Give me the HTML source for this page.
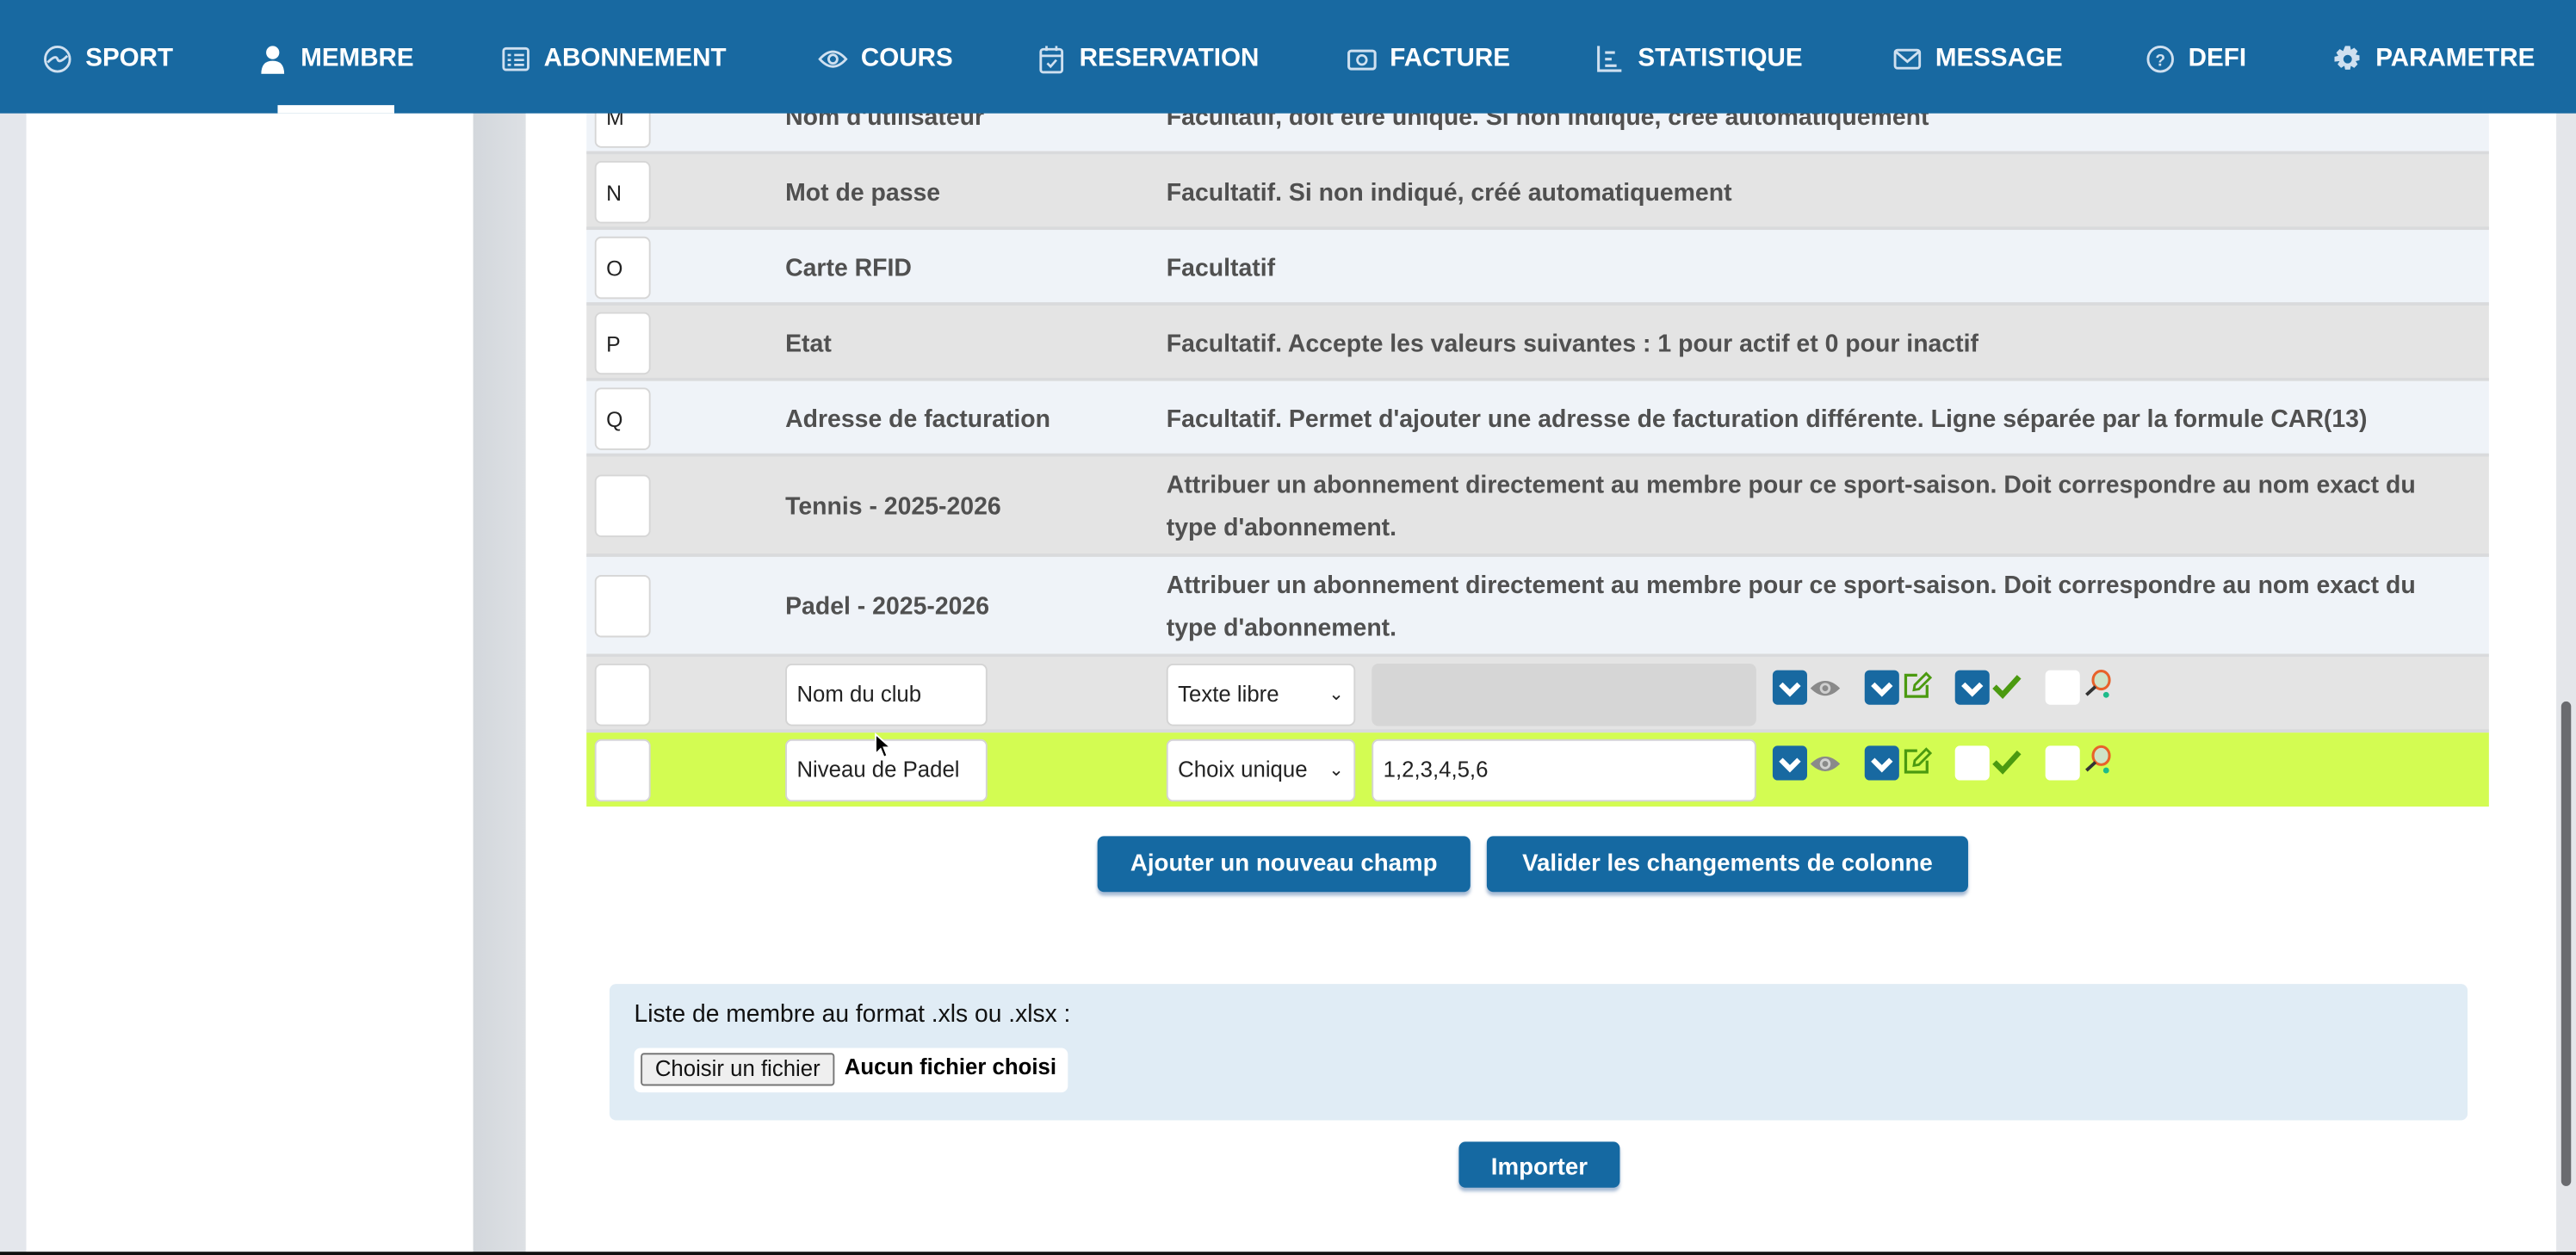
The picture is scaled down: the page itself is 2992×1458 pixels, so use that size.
<!DOCTYPE html>
<html><head><meta charset="utf-8"><style>
html,body{margin:0;padding:0;width:2992px;height:1458px;overflow:hidden;background:#fff}
#r{position:absolute;left:0;top:0;width:1568px;height:764px;transform:scale(1.90816,1.9084);transform-origin:0 0;font-family:"Liberation Sans",Arial,sans-serif;overflow:hidden;background:#fff}
.a{position:absolute}
.nav{left:0;top:0;width:1568px;height:69px;background:#1869a1}
.ni{position:absolute;top:27px;color:#fff;font-weight:bold;font-size:15.5px;line-height:18px;white-space:nowrap}
.ni svg{position:absolute;left:-26px;top:0}
.row{position:absolute;left:357px;width:1158px;border-bottom:2px solid #d9dadc;box-sizing:border-box}
.g{background:#e4e4e4}.l{background:#eff3f8}
.lb{position:absolute;left:5px;width:34px;height:38px;background:#fff;border:1px solid #d6d6d6;border-radius:4px;box-sizing:border-box;font-size:13px;color:#222;padding-left:6px;line-height:38px}
.t2{position:absolute;left:121px;font-weight:bold;font-size:14.9px;color:#505050}
.t3{position:absolute;left:353px;font-weight:bold;font-size:14.9px;color:#505050;line-height:26px;width:800px}
.t3.n{width:775px}
.inp{position:absolute;background:#fff;border:1px solid #d4d4d4;border-radius:4px;box-sizing:border-box;font-size:13.5px;color:#222;padding-left:6px;line-height:36px;height:38px}
.btn{position:absolute;background:#1569a2;color:#fff;font-weight:bold;font-size:14.5px;text-align:center;border-radius:4px;box-shadow:0 2px 2px rgba(80,120,170,.5)}
</style></head><body><div id="r">
<div class="a" style="left:0;top:0;width:16px;height:764px;background:#e4e7ec"></div>
<div class="a" style="left:288px;top:0;width:32px;height:764px;background:linear-gradient(90deg,#d3d7dc,#dde0e4)"></div>
<div class="a" style="left:1556px;top:0;width:12px;height:764px;background:#e4e6ea"></div>
<div class="a" style="left:1559px;top:427px;width:6px;height:295px;border-radius:3px;background:#6a6b6f"></div>
<div class="a" style="left:0;top:762px;width:1568px;height:2px;background:#111"></div>

<div class="row l" style="top:48px;height:46px"><div class="lb" style="top:4px">M</div><div class="t2" style="top:16px">Nom d'utilisateur</div><div class="t3" style="top:11px">Facultatif, doit être unique. Si non indiqué, créé automatiquement</div></div>
<div class="row g" style="top:94px;height:46px"><div class="lb" style="top:4px">N</div><div class="t2" style="top:16px">Mot de passe</div><div class="t3" style="top:11px">Facultatif. Si non indiqué, créé automatiquement</div></div>
<div class="row l" style="top:140px;height:46px"><div class="lb" style="top:4px">O</div><div class="t2" style="top:16px">Carte RFID</div><div class="t3" style="top:11px">Facultatif</div></div>
<div class="row g" style="top:186px;height:46px"><div class="lb" style="top:4px">P</div><div class="t2" style="top:16px">Etat</div><div class="t3" style="top:11px">Facultatif. Accepte les valeurs suivantes : 1 pour actif et 0 pour inactif</div></div>
<div class="row l" style="top:232px;height:46px"><div class="lb" style="top:4px">Q</div><div class="t2" style="top:16px">Adresse de facturation</div><div class="t3" style="top:11px">Facultatif. Permet d'ajouter une adresse de facturation différente. Ligne séparée par la formule CAR(13)</div></div>
<div class="row g" style="top:278px;height:61px"><div class="lb" style="top:11px"></div><div class="t2" style="top:23px">Tennis - 2025-2026</div><div class="t3 n" style="top:5px">Attribuer un abonnement directement au membre pour ce sport-saison. Doit correspondre au nom exact du type d'abonnement.</div></div>
<div class="row l" style="top:339px;height:61px"><div class="lb" style="top:11px"></div><div class="t2" style="top:23px">Padel - 2025-2026</div><div class="t3 n" style="top:5px">Attribuer un abonnement directement au membre pour ce sport-saison. Doit correspondre au nom exact du type d'abonnement.</div></div>

<div class="row g" style="top:400px;height:46px">
<div class="lb" style="top:4px"></div>
<div class="inp" style="left:121px;top:4px;width:123px">Nom du club</div>
<div class="inp" style="left:353px;top:4px;width:115px">Texte libre<span style="position:absolute;right:6px;top:0;font-size:11px">&#8964;</span></div>
<div class="a" style="left:478px;top:4px;width:234px;height:38px;background:#d6d6d6;border-radius:4px"></div>
</div>
<div class="row" style="top:446px;height:45px;background:#d3fc52;border:none">
<div class="lb" style="top:4px"></div>
<div class="inp" style="left:121px;top:4px;width:123px">Niveau de Padel</div>
<div class="inp" style="left:353px;top:4px;width:115px">Choix unique<span style="position:absolute;right:6px;top:0;font-size:11px">&#8964;</span></div>
<div class="inp" style="left:478px;top:4px;width:234px">1,2,3,4,5,6</div>
</div>

<svg class="a" style="left:1078px;top:406px" width="220" height="80" viewBox="0 0 220 80">
<defs>
<g id="ck"><rect width="21" height="21" rx="3" fill="#1869a1"/><path d="M5 8.5 L10.5 14 L16 8.5" stroke="#fff" stroke-width="3.2" fill="none"/></g>
<g id="eye"><path d="M0 6 Q9 -3 18 6 Q9 15 0 6Z" fill="#8a8a8a"/><circle cx="9" cy="6" r="3.3" fill="#d0d0d0"/><circle cx="9" cy="6" r="1.8" fill="#8a8a8a"/></g>
<g id="ed"><path d="M9 2 H2 V15 H15 V8" stroke="#4b9a10" stroke-width="1.7" fill="none"/><path d="M7 11 L7.5 8 L14.5 1 L17 3.5 L10 10.5Z" stroke="#4b9a10" stroke-width="1.5" fill="none"/></g>
<g id="ok"><path d="M1 8 L6 13 L16 2" stroke="#4b9a10" stroke-width="3.4" fill="none"/></g>
<g id="rk"><ellipse cx="11" cy="6" rx="5" ry="5.5" fill="#cfe3c8" stroke="#e8622a" stroke-width="1.6"/><path d="M7.5 10 L2 15" stroke="#333" stroke-width="2"/><circle cx="14" cy="15" r="1.8" fill="#1dbb8a"/></g>
<rect id="wb" width="21" height="21" rx="3" fill="#fff"/>
</defs>
<use href="#ck" x="1" y="2"/><use href="#eye" x="24" y="7"/>
<use href="#ck" x="57" y="2"/><use href="#ed" x="80" y="3"/>
<use href="#ck" x="112" y="2"/><use href="#ok" x="135" y="4"/>
<use href="#wb" x="167" y="2"/><use href="#rk" x="190" y="2"/>
<use href="#ck" x="1" y="48"/><use href="#eye" x="24" y="53"/>
<use href="#ck" x="57" y="48"/><use href="#ed" x="80" y="49"/>
<use href="#wb" x="112" y="48"/><use href="#ok" x="135" y="50"/>
<use href="#wb" x="167" y="48"/><use href="#rk" x="190" y="48"/>
</svg>

<svg class="a" style="left:532px;top:446px" width="12" height="18"><path d="M1 1 L1 13 L4 10 L6 15 L8 14 L6 9 L10 9Z" fill="#000" stroke="#fff" stroke-width="1"/></svg>

<div class="btn" style="left:668px;top:509px;width:227px;height:34px;line-height:34px">Ajouter un nouveau champ</div>
<div class="btn" style="left:905px;top:509px;width:293px;height:34px;line-height:34px">Valider les changements de colonne</div>

<div class="a" style="left:371px;top:599px;width:1131px;height:83px;background:#e0ecf5;border-radius:4px">
<div class="a" style="left:15px;top:11px;font-size:14.8px;color:#111">Liste de membre au format .xls ou .xlsx :</div>
<div class="a" style="left:15px;top:39px;width:264px;height:27px;background:#fff;border-radius:4px">
<div class="a" style="left:4px;top:3px;width:118px;height:20px;background:#efefef;border:1px solid #767676;border-radius:2px;box-sizing:border-box;font-size:13.5px;line-height:18px;text-align:center;color:#111">Choisir un fichier</div>
<div class="a" style="left:128px;top:4px;font-size:13.5px;font-weight:bold;color:#000">Aucun fichier choisi</div>
</div></div>
<div class="btn" style="left:888px;top:695px;width:98px;height:28px;line-height:32px">Importer</div>

<div class="a nav">
<div class="a" style="left:169px;top:64px;width:71px;height:5px;background:#fff"></div>
<div class="ni" style="left:52px"><svg width="18" height="18" viewBox="0 0 18 18"><circle cx="9" cy="9" r="7.5" fill="none" stroke="#cfe0f0" stroke-width="1.5"/><path d="M3 11 Q8 6 9 9 Q10 12 15 7" stroke="#cfe0f0" stroke-width="1.5" fill="none"/></svg>SPORT</div>
<div class="ni" style="left:183px"><svg width="18" height="18" viewBox="0 0 18 18"><circle cx="9" cy="5" r="4" fill="#fff"/><path d="M2 18 Q2 10 9 10 Q16 10 16 18Z" fill="#fff"/></svg>MEMBRE</div>
<div class="ni" style="left:331px"><svg width="18" height="18" viewBox="0 0 18 18"><rect x="1.5" y="2.5" width="15" height="13" rx="1.5" fill="none" stroke="#cfe0f0" stroke-width="1.5"/><path d="M4 6.5h2M8 6.5h6M4 9.5h2M8 9.5h6M4 12.5h2M8 12.5h6" stroke="#cfe0f0" stroke-width="1.4"/></svg>ABONNEMENT</div>
<div class="ni" style="left:524px"><svg width="18" height="18" viewBox="0 0 18 18"><path d="M1 9 Q9 0 17 9 Q9 18 1 9Z" fill="none" stroke="#cfe0f0" stroke-width="1.5"/><circle cx="9" cy="9" r="2.6" fill="none" stroke="#cfe0f0" stroke-width="1.5"/></svg>COURS</div>
<div class="ni" style="left:657px"><svg width="18" height="18" viewBox="0 0 18 18"><rect x="2.5" y="3" width="13" height="14" rx="1.5" fill="none" stroke="#cfe0f0" stroke-width="1.5"/><path d="M2.5 7h13M6 1v3M12 1v3M6.5 11.5l2 2 3.5-4" stroke="#cfe0f0" stroke-width="1.4" fill="none"/></svg>RESERVATION</div>
<div class="ni" style="left:846px"><svg width="18" height="18" viewBox="0 0 18 18"><rect x="1" y="4" width="16" height="11" rx="1.5" fill="none" stroke="#cfe0f0" stroke-width="1.6"/><circle cx="9" cy="9.5" r="2.8" fill="none" stroke="#cfe0f0" stroke-width="1.4"/></svg>FACTURE</div>
<div class="ni" style="left:997px"><svg width="18" height="18" viewBox="0 0 18 18"><path d="M2 1v15h14M6 5h6M6 9h4M6 13h7" stroke="#cfe0f0" stroke-width="1.6" fill="none"/></svg>STATISTIQUE</div>
<div class="ni" style="left:1178px"><svg width="18" height="18" viewBox="0 0 18 18"><rect x="1.5" y="3.5" width="15" height="11" rx="1.5" fill="none" stroke="#cfe0f0" stroke-width="1.5"/><path d="M2 4.5l7 6 7-6" stroke="#cfe0f0" stroke-width="1.5" fill="none"/></svg>MESSAGE</div>
<div class="ni" style="left:1332px"><svg width="18" height="18" viewBox="0 0 18 18"><circle cx="9" cy="9" r="7.5" fill="none" stroke="#cfe0f0" stroke-width="1.5"/><text x="9" y="13" font-size="10" text-anchor="middle" fill="#cfe0f0" font-family="Liberation Sans" font-weight="bold">?</text></svg>DEFI</div>
<div class="ni" style="left:1446px"><svg width="18" height="18" viewBox="0 0 18 18"><path d="M7.5 1h3l.5 2.3 2-1.2 2.1 2.1-1.2 2 2.3.5v3l-2.3.5 1.2 2-2.1 2.1-2-1.2-.5 2.3h-3l-.5-2.3-2 1.2-2.1-2.1 1.2-2L1 10.5v-3l2.3-.5-1.2-2 2.1-2.1 2 1.2z" fill="#cfe0f0"/><circle cx="9" cy="9" r="2.6" fill="#1869a1"/></svg>PARAMETRE</div>
</div>
</div></body></html>
